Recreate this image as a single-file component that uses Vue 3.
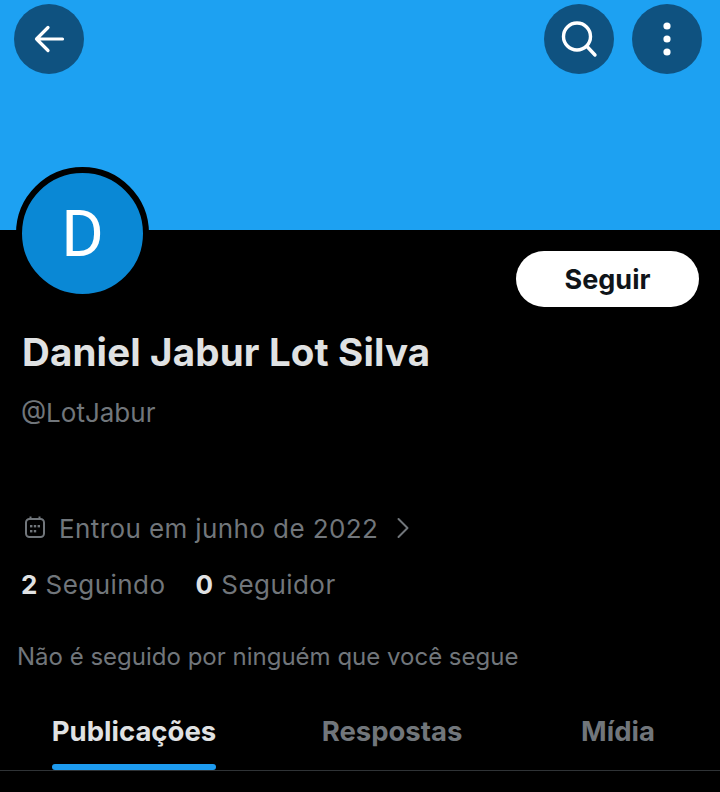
<template>
  <div class="profile">
    <div class="banner">
      <button class="round">
        <svg width="36" height="36" viewBox="0 0 36 36" fill="none" stroke="#fff" stroke-width="3.2" stroke-linecap="round" stroke-linejoin="round">
          <path d="M31.5 18H5.5M17 6.5 5.5 18 17 29.5" />
        </svg>
      </button>
      <div class="spacer"></div>
      <button class="round">
        <svg width="38" height="38" viewBox="0 0 38 38" fill="none" stroke="#fff" stroke-width="3.4" stroke-linecap="round">
          <circle cx="17" cy="16.5" r="13.5" />
          <path d="M27 26.5 35 35" />
        </svg>
      </button>
      <button class="round">
        <svg width="12" height="38" viewBox="0 0 12 38" fill="#fff">
          <circle cx="6" cy="6" r="3.6" />
          <circle cx="6" cy="19" r="3.6" />
          <circle cx="6" cy="32" r="3.6" />
        </svg>
      </button>
    </div>

    <div class="top-row">
      <div class="avatar"><span>D</span></div>
      <button class="follow">Seguir</button>
    </div>

    <h1 class="name">Daniel Jabur Lot Silva</h1>
    <div class="handle">@LotJabur</div>

    <div class="joined">
      <svg width="24" height="24" viewBox="0 0 24 24" fill="none" stroke="#71767b" stroke-width="2">
        <rect x="3" y="3" width="18" height="18" rx="3.5" />
        <path d="M7.5 .5v3M16.5 .5v3" />
        <g fill="#71767b" stroke="none">
          <rect x="7" y="9" width="2.4" height="2.4" />
          <rect x="10.8" y="9" width="2.4" height="2.4" />
          <rect x="14.6" y="9" width="2.4" height="2.4" />
          <rect x="7" y="14" width="2.4" height="2.4" />
          <rect x="10.8" y="14" width="2.4" height="2.4" />
        </g>
      </svg>
      <span>Entrou em junho de 2022</span>
      <svg class="chev" width="14" height="22" viewBox="0 0 14 22" fill="none" stroke="#71767b" stroke-width="2" stroke-linecap="round" stroke-linejoin="round">
        <path d="M2.5 2 11.5 11 2.5 20" />
      </svg>
    </div>

    <div class="counts">
      <span><b>2</b> Seguindo</span>
      <span><b>0</b> Seguidor</span>
    </div>

    <div class="note">Não é seguido por ninguém que você segue</div>

    <div class="tabs">
      <div v-for="t in tabs" :key="t.label" class="tab" :class="{ active: t.active }">
        {{ t.label }}
      </div>
    </div>
  </div>
</template>

<script setup>
const tabs = [
  { label: "Publicações", active: true },
  { label: "Respostas" },
  { label: "Mídia" },
];
</script>

<style>
html,
body {
  margin: 0;
  background: #000;
}
</style>

<style scoped>
.profile {
  width: 720px;
  height: 792px;
  background: #000;
  overflow: hidden;
  font-family: "Inter", "Noto Sans", sans-serif;
  color: #e7e9ea;
}
.banner {
  height: 230px;
  box-sizing: border-box;
  background: #1da1f2;
  display: flex;
  gap: 18px;
  padding: 4px 18px 0 14px;
  align-items: flex-start;
}
.spacer {
  flex: 1;
}
.round {
  width: 70px;
  height: 70px;
  border: 0;
  padding: 0;
  border-radius: 50%;
  background: #0f5280;
  display: flex;
  align-items: center;
  justify-content: center;
}
.top-row {
  display: flex;
  justify-content: space-between;
  align-items: flex-start;
  padding: 0 21px 0 16px;
  height: 99px;
}
.avatar {
  width: 121px;
  height: 121px;
  margin-top: -63px;
  border: 6px solid #000;
  border-radius: 50%;
  background: #0a88d5;
  color: #fff;
  display: flex;
  align-items: center;
  justify-content: center;
  font-size: 65px;
  font-family: "Roboto", sans-serif;
}
.follow {
  width: 183px;
  height: 56px;
  margin-top: 21px;
  border: 0;
  border-radius: 28px;
  background: #fff;
  color: #0f1419;
  font-family: inherit;
  font-size: 27px;
  font-weight: 700;
}
.name {
  margin: 0;
  padding-left: 22px;
  font-size: 38.5px;
  font-weight: 700;
  line-height: 46px;
  color: #e0e2e3;
  letter-spacing: 0.15px;
}
.handle {
  margin-top: 22px;
  padding-left: 21px;
  font-size: 26px;
  line-height: 32px;
  color: #71767b;
}
.joined {
  margin-top: 83px;
  padding-left: 23px;
  display: flex;
  align-items: center;
  height: 32px;
  font-size: 26px;
  letter-spacing: 0.4px;
  color: #71767b;
}
.joined span {
  margin-left: 12px;
}
.chev {
  margin-left: 18px;
}
.counts {
  margin-top: 25px;
  padding-left: 21px;
  display: flex;
  gap: 30px;
  font-size: 26px;
  letter-spacing: 0.45px;
  line-height: 32px;
  color: #71767b;
}
.counts b {
  color: #e0e2e3;
}
.note {
  margin-top: 41px;
  padding-left: 17px;
  font-size: 24px;
  line-height: 30px;
  color: #71767b;
}
.tabs {
  margin-top: 40px;
  height: 58px;
  border-bottom: 1px solid #2f3336;
  font-size: 27.5px;
  font-weight: 700;
  color: #71767b;
  display: grid;
  grid-template-columns: 268px 248px 204px;
}
.tab {
  box-sizing: border-box;
  height: 58px;
  padding-top: 2px;
  line-height: 34px;
  justify-self: center;
  position: relative;
}
.tab.active {
  color: #e0e2e3;
}
.tab.active::after {
  content: "";
  position: absolute;
  left: 0;
  right: 0;
  bottom: 0;
  height: 6px;
  border-radius: 3px;
  background: #1d9bf0;
}
</style>
